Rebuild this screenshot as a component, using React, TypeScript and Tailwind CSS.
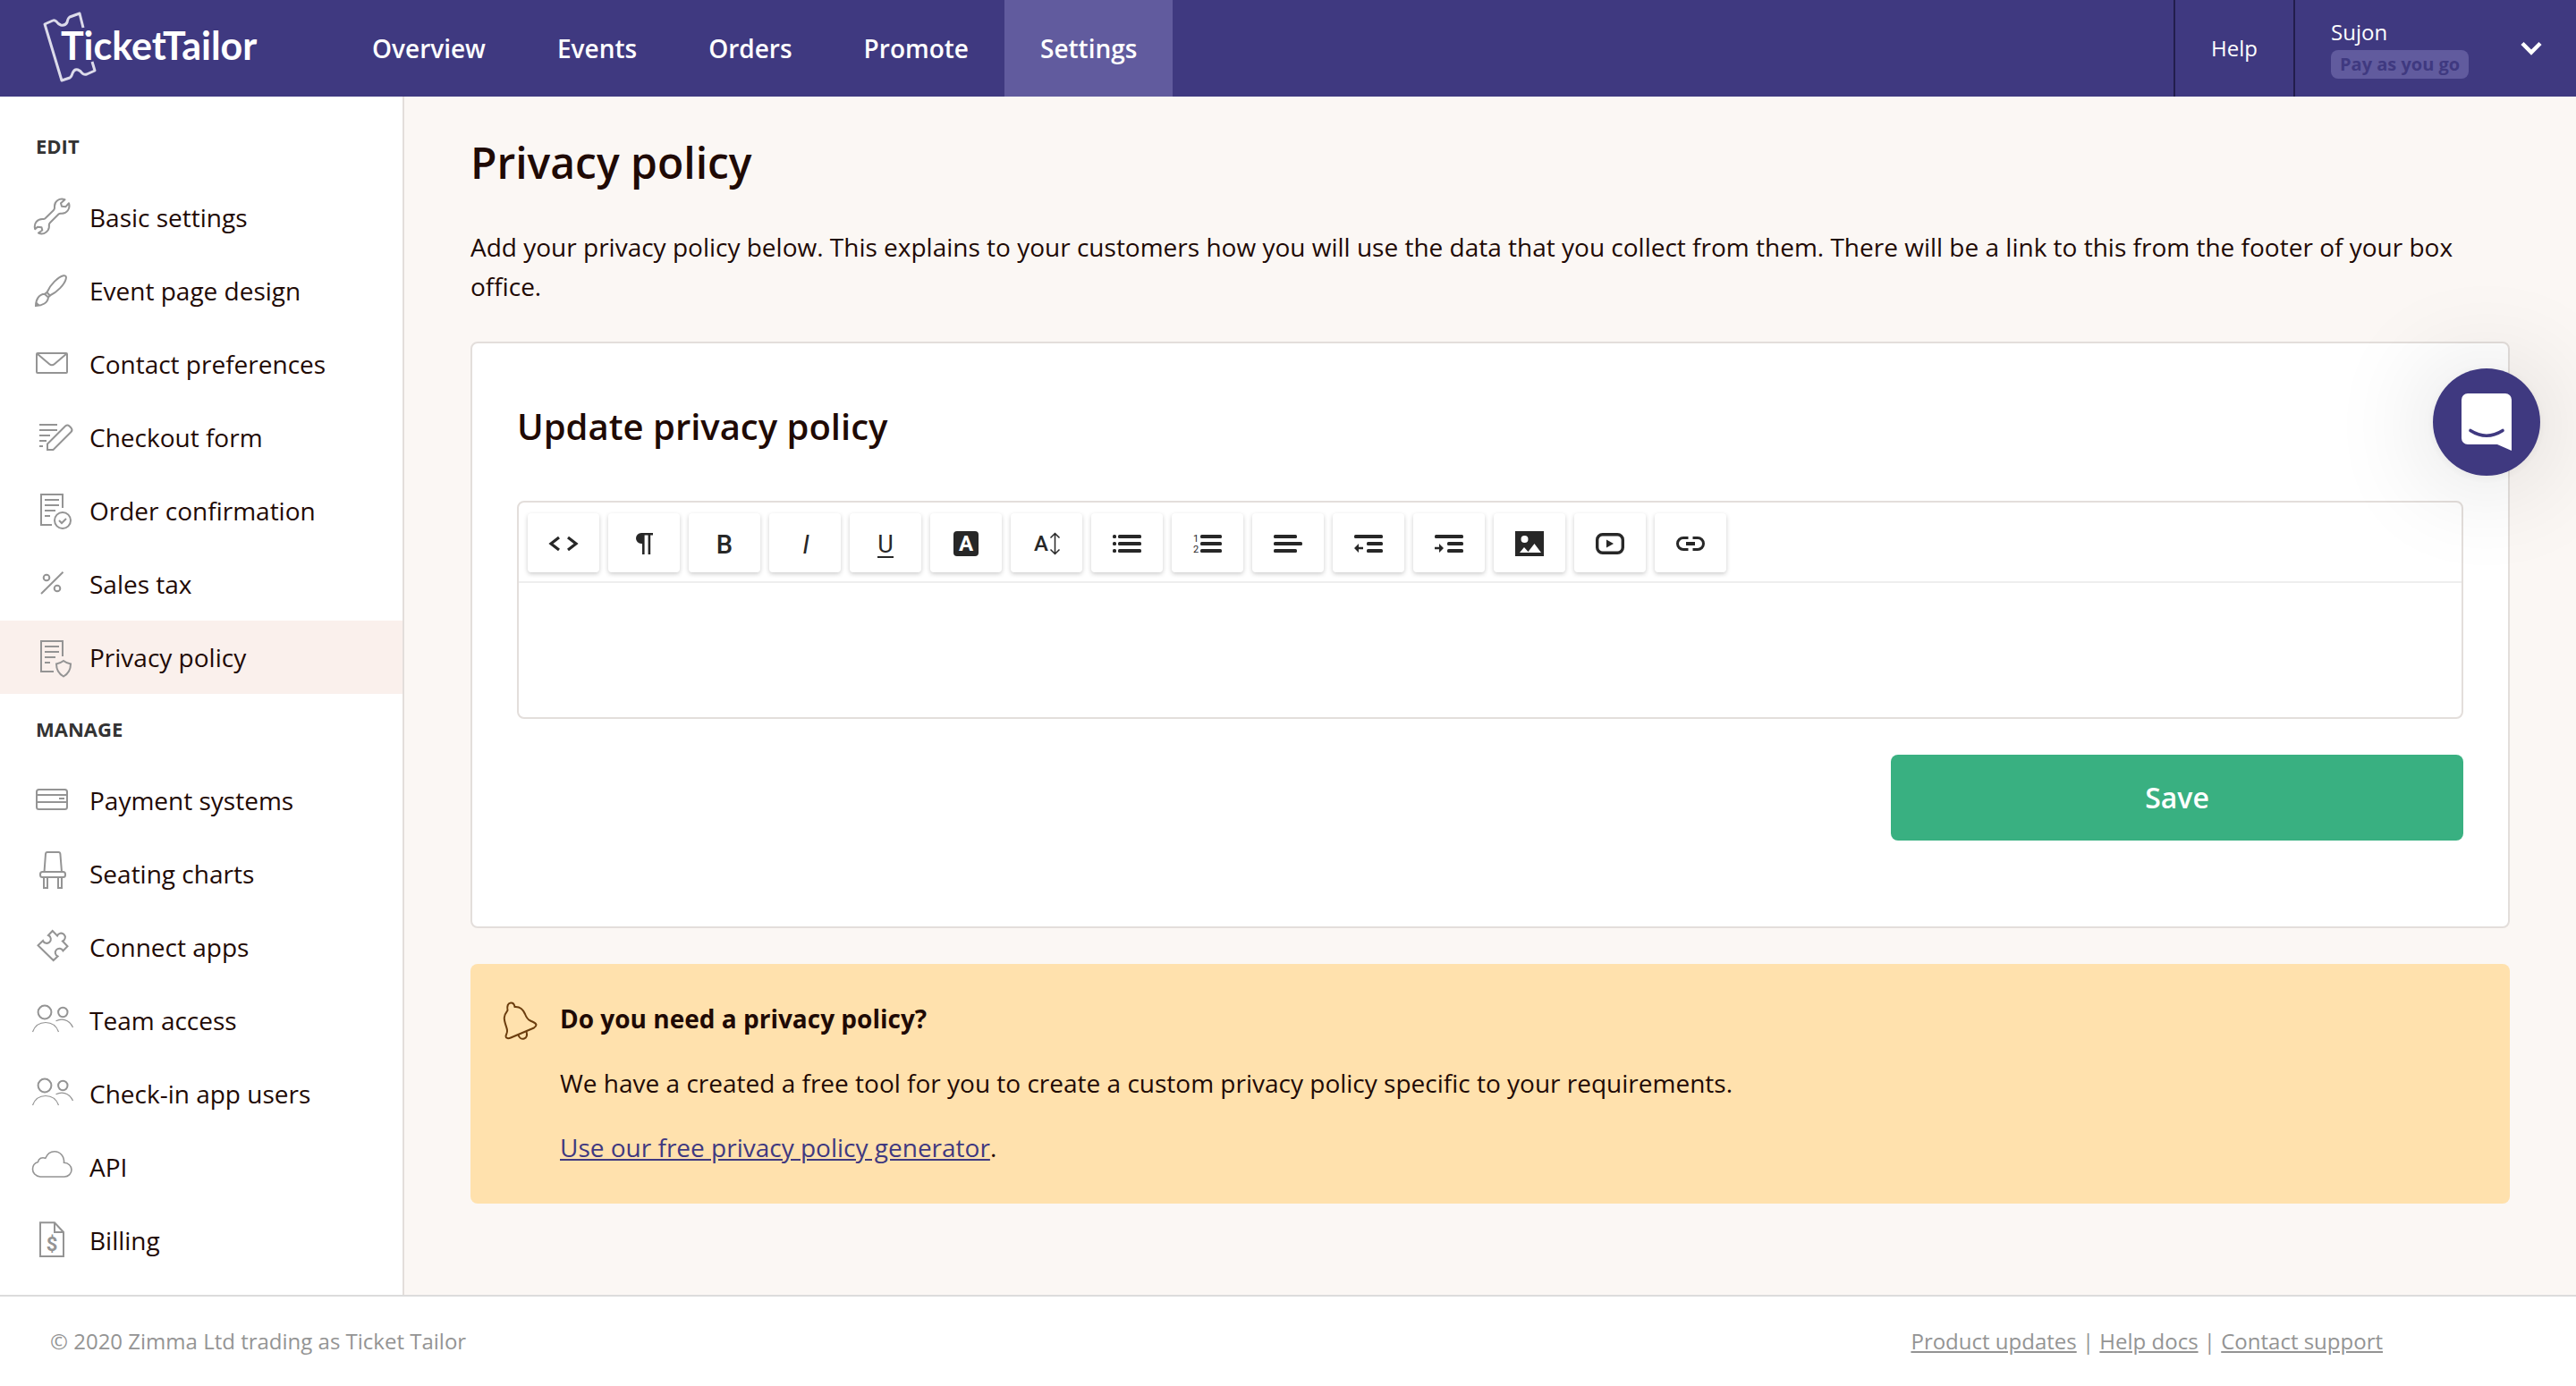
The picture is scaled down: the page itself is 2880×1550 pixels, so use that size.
import React from 'react';

const navItems = ['Overview', 'Events', 'Orders', 'Promote', 'Settings'];

function Logo() {
  return (
    <svg viewBox="0 0 260 84" className="h-[84px] w-[260px]" role="img" aria-label="TicketTailor">
      <path
        d="M45 19L41 3L30 7Q28 8 27 13Q25 17 20 16Q17 15 15 12Q13 10 11 11L2 15L21 78L30 75Q32 74 33 70Q35 65 39 66Q42 67 44 70Q46 72 49 71L58 67L55 57"
        fill="none"
        stroke="#dcdbea"
        strokeWidth="3"
        strokeLinejoin="round"
      />
      <text x="20" y="55" fill="#ffffff" fontFamily="Lato, sans-serif" fontWeight="700" fontSize="43">
        TicketTailor
      </text>
    </svg>
  );
}

function SideIcon({ children }: { children: React.ReactNode }) {
  return (
    <svg
      viewBox="0 0 48 48"
      className="h-12 w-12 shrink-0 overflow-visible text-[#949494]"
      fill="none"
      stroke="currentColor"
      strokeWidth="2"
      aria-hidden="true"
    >
      {children}
    </svg>
  );
}

const people = (
  <>
    <circle cx="14" cy="15" r="7.4" />
    <circle cx="34.3" cy="15" r="5.2" />
    <path strokeWidth="1.2" d="M.5 37C3 30 8.500 26.500 15 26.500S27 30 29.500 37M26.500 24.800C32 22 41 22 45.500 32" />
  </>
);

const docLines = <path d="M14 12H30M14 18H30M14 24H26M14 30H20" />;

const editItems = [
  {
    label: 'Basic settings',
    icon: (
      <path
        strokeLinejoin="round"
        d="M36.500 4.200C30 2 24.500 6.500 25 12.500Q25.200 14.500 24 16L14.500 25.200Q13.500 26.200 12 26C5.500 25.500 1.500 31 3.200 37.300L6 34.700L10.500 35.300L11.300 38.500L7 41.500C13 44.500 19.500 39 18.800 33.500Q18.600 31.500 20 30L29.500 20.500Q30.500 19.500 32.500 19.700C38.500 20.200 43 14.500 41 8.200L37.500 12.200L33 11.800L32 8.200Z"
      />
    ),
  },
  {
    label: 'Event page design',
    icon: (
      <>
        <path d="M16.500 26C20 17.500 29 8.500 35 7.300C38 6.700 38.300 9 37.700 11C36 17.500 27.500 26 19.800 29.500Z" strokeLinejoin="round" />
        <path d="M13.800 27.800C8 28 4 33.500 4 41C11.500 41 17.500 37.500 18 31.500M13.800 27.800L18 31.500M13.800 27.800L16.500 26M18 31.500L19.800 29.500" />
        <path d="M4 36L8.500 40L4 41.200Z" fill="currentColor" stroke="none" />
      </>
    ),
  },
  {
    label: 'Contact preferences',
    icon: (
      <>
        <rect x="5" y="12" width="34" height="22" rx="1" />
        <path d="M5.500 12.500L19 24Q22 26.500 25 24L38.500 12.500" />
      </>
    ),
  },
  {
    label: 'Checkout form',
    icon: (
      <path d="M8 10H28M8 16H28M8 22H20M8 28H16M8 34H12M17 31.500L37 11.500Q39.500 9.500 41.500 11.500L43.500 13.500Q45.500 16 43.500 18L23.500 38H17Z" />
    ),
  },
  {
    label: 'Order confirmation',
    icon: (
      <>
        {docLines}
        <path d="M34 21V6H10V40H22M30 35L33 38L38 33" />
        <circle cx="34" cy="35" r="9" />
      </>
    ),
  },
  {
    label: 'Sales tax',
    icon: (
      <>
        <circle cx="16" cy="17" r="3.3" />
        <circle cx="28" cy="29" r="3.3" />
        <path d="M10 35L34.500 10.800" />
      </>
    ),
  },
  {
    label: 'Privacy policy',
    active: true,
    icon: (
      <>
        {docLines}
        <path d="M34 23V6H10V40H24" />
        <path d="M35 28Q31 31 27 31.500Q27 41 35 45.500Q43 41 43 31.500Q39 31 35 28Z" />
      </>
    ),
  },
];

const manageItems = [
  {
    label: 'Payment systems',
    icon: (
      <>
        <rect x="5" y="12" width="34" height="22" rx="2.500" />
        <path d="M5 18H39M5 26H39M30 22H36" />
      </>
    ),
  },
  {
    label: 'Seating charts',
    icon: (
      <>
        <path d="M13.500 22L15 2Q15.200 0 17 0H29.500Q31.200 0 31.400 2L33 22" />
        <rect x="9" y="22" width="28" height="6" rx="2.500" />
        <path d="M13 28V40H17V28M29 28V40H33V28" />
      </>
    ),
  },
  {
    label: 'Connect apps',
    icon: (
      <path d="M22.700 6L28 11.500A4.600 4.600 0 1 1 34 17.500L39.500 23.300L34.500 28.300A4.600 4.600 0 1 0 28.500 34.500L23.700 39L6.500 22.300L12 17A4.600 4.600 0 1 0 18 11Z" />
    ),
  },
  { label: 'Team access', icon: people },
  { label: 'Check-in app users', icon: people },
  {
    label: 'API',
    icon: (
      <path
        strokeWidth="1.600"
        d="M9 35C3.500 34.500 .5 30.500 .5 26.500C.5 22.500 3 19.500 6.500 18.500C7 14.500 11 12.800 14.800 14.300C17 9 21 6.800 25 6.800C31 6.800 36 12 35.500 19.300C40.500 19.500 44 23 44 27C44 31.500 40.500 35 36 35Z"
      />
    ),
  },
  {
    label: 'Billing',
    icon: (
      <>
        <path d="M25 4.300H9V42H35V15ZM25 4.300V15H35" />
        <text
          x="22"
          y="36"
          textAnchor="middle"
          fill="currentColor"
          stroke="none"
          fontFamily="Roboto, sans-serif"
          fontWeight="700"
          fontSize="22"
        >
          $
        </text>
      </>
    ),
  },
];

function SideGroup({
  title,
  titleClass,
  items,
}: {
  title: string;
  titleClass: string;
  items: { label: string; icon: React.ReactNode; active?: boolean }[];
}) {
  return (
    <section>
      <h2 className={`px-10 text-[22px] leading-[30px] font-bold text-[#333333] ${titleClass}`}>{title}</h2>
      <ul>
        {items.map((item) => (
          <li key={item.label}>
            <a
              href="#"
              aria-current={item.active ? 'page' : undefined}
              className={`flex h-[82px] items-center gap-4 pl-9 ${item.active ? 'bg-[#faf0ec]' : ''}`}
            >
              <SideIcon>{item.icon}</SideIcon>
              {item.label}
            </a>
          </li>
        ))}
      </ul>
    </section>
  );
}

function ToolIcon({ children }: { children: React.ReactNode }) {
  return (
    <svg viewBox="0 0 40 40" className="h-10 w-10" fill="currentColor" aria-hidden="true">
      {children}
    </svg>
  );
}

function Glyph(props: { x: number; y: number; size: number; weight?: number; italic?: boolean; color?: string; children: string }) {
  return (
    <text
      x={props.x}
      y={props.y}
      textAnchor="middle"
      fontFamily="Roboto, sans-serif"
      fontSize={props.size}
      fontWeight={props.weight ?? 400}
      fontStyle={props.italic ? 'italic' : 'normal'}
      fill={props.color ?? 'currentColor'}
    >
      {props.children}
    </text>
  );
}

function Bars({ rows }: { rows: [number, number][] }) {
  return (
    <>
      {rows.map(([from, to], i) => (
        <rect key={i} x={from} y={10 + i * 8} width={to - from} height="4" rx="1.500" />
      ))}
    </>
  );
}

const tools = [
  {
    name: 'HTML',
    icon: <path d="M15 13L6 20L15 27M25 13L34 20L25 27" fill="none" stroke="currentColor" strokeWidth="3.200" />,
  },
  {
    name: 'Formatting',
    icon: <path d="M30 8V10.500H27.200V32H24.600V10.500H20.600V32H18V20H17A6 6 0 0 1 17 8Z" />,
  },
  { name: 'Bold', icon: <Glyph x={20} y={31} size={29} weight={500}>B</Glyph> },
  { name: 'Italic', icon: <Glyph x={21} y={31} size={29} italic>I</Glyph> },
  {
    name: 'Underline',
    icon: (
      <>
        <Glyph x={20} y={30} size={27}>U</Glyph>
        <rect x="11" y="34" width="18" height="2" />
      </>
    ),
  },
  {
    name: 'Text colour',
    icon: (
      <>
        <rect x="6" y="6" width="28" height="28" rx="4" />
        <Glyph x={20} y={28} size={24} weight={700} color="#ffffff">A</Glyph>
      </>
    ),
  },
  {
    name: 'Font size',
    icon: (
      <>
        <Glyph x={14} y={28} size={24} weight={500}>A</Glyph>
        <path d="M29.500 9V31M24.500 13.500L29.500 8.500L34.500 13.500M24.500 26.500L29.500 31.500L34.500 26.500" fill="none" stroke="currentColor" strokeWidth="1.500" />
      </>
    ),
  },
  {
    name: 'Unordered list',
    icon: (
      <>
        <Bars rows={[[4, 8], [4, 8], [4, 8]]} />
        <Bars rows={[[10, 36], [10, 36], [10, 36]]} />
      </>
    ),
  },
  {
    name: 'Ordered list',
    icon: (
      <>
        <Glyph x={7} y={18} size={11}>1</Glyph>
        <Glyph x={7} y={30} size={11}>2</Glyph>
        <Bars rows={[[12, 36], [12, 36], [12, 36]]} />
      </>
    ),
  },
  { name: 'Align left', icon: <Bars rows={[[4, 30], [4, 36], [4, 30]]} /> },
  {
    name: 'Outdent',
    icon: (
      <>
        <Bars rows={[[4, 36], [18, 36], [18, 36]]} />
        <path d="M4 25L9 20V23.700H14V26.300H9V30Z" />
      </>
    ),
  },
  {
    name: 'Indent',
    icon: (
      <>
        <Bars rows={[[4, 36], [18, 36], [18, 36]]} />
        <path d="M14 25L9 20V23.700H4V26.300H9V30Z" />
      </>
    ),
  },
  {
    name: 'Image',
    icon: <path fillRule="evenodd" d="M4 6H36V34H4ZM14.500 11A4 4 0 1 0 14.500 19A4 4 0 1 0 14.500 11ZM9 30H33L25.500 20L18.500 29L14 24Z" />,
  },
  {
    name: 'Video',
    icon: (
      <>
        <rect x="5.700" y="9.700" width="28.600" height="20.600" rx="6" fill="none" stroke="currentColor" strokeWidth="3.400" />
        <path d="M16 15.500L24 20L16 24.500Z" />
      </>
    ),
  },
  {
    name: 'Link',
    icon: (
      <>
        <path d="M17.500 13.500H12A6.500 6.500 0 0 0 12 26.500H17.500M22.500 13.500H28A6.500 6.500 0 0 1 28 26.500H22.500" fill="none" stroke="currentColor" strokeWidth="3" />
        <rect x="15" y="18" width="10" height="4" />
      </>
    ),
  },
];

export default function App() {
  return (
    <div className="flex min-h-screen flex-col bg-[#fbf7f4] font-['Open_Sans',sans-serif] text-[28px] leading-[44px] text-[#1f0a05]">
      <header className="flex h-[108px] bg-[#3f3980] text-white">
        <a href="#" className="flex w-[376px] shrink-0 items-center pl-12">
          <Logo />
        </a>
        <nav aria-label="Main" className="flex flex-1">
          {navItems.map((item) => (
            <a
              key={item}
              href="#"
              aria-current={item === 'Settings' ? 'page' : undefined}
              className={`flex items-center px-10 font-semibold ${item === 'Settings' ? 'bg-[#615b9e]' : ''}`}
            >
              {item}
            </a>
          ))}
        </nav>
        <a href="#" className="flex items-center border-l-2 border-[#221d4c] px-10 text-2xl">
          Help
        </a>
        <button
          type="button"
          className="flex w-[316px] items-center justify-between border-l-2 border-[#221d4c] pr-9 pl-10 text-left text-2xl"
        >
          <span className="flex flex-col items-start gap-1">
            <span className="leading-8">Sujon</span>
            <span className="rounded-lg bg-[#615b9e] px-[10px] text-xl leading-8 font-bold text-[#3f3980]">Pay as you go</span>
          </span>
          <svg viewBox="0 0 28 20" className="h-5 w-7" fill="none" stroke="currentColor" strokeWidth="4.500" aria-hidden="true">
            <path d="M4 4.500L14 14.500L24 4.500" />
          </svg>
        </button>
      </header>

      <div className="flex flex-1">
        <aside className="w-[452px] shrink-0 border-r-2 border-[#e3dedb] bg-white pb-5">
          <SideGroup title="EDIT" titleClass="pt-10 pb-6" items={editItems} />
          <SideGroup title="MANAGE" titleClass="py-6" items={manageItems} />
        </aside>

        <main className="min-w-0 flex-1 px-[74px] pt-[42px]">
          <h1 className="mb-10 text-5xl leading-[64px] font-semibold">Privacy policy</h1>
          <p className="mb-10">
            Add your privacy policy below. This explains to your customers how you will use the data that you collect from
            them. There will be a link to this from the footer of your box office.
          </p>

          <form
            onSubmit={(e) => e.preventDefault()}
            className="rounded-lg border-2 border-[#e3dedb] bg-white px-[50px] pt-16 pb-24"
          >
            <h2 className="mb-[54px] text-[40px] leading-[58px] font-semibold">Update privacy policy</h2>
            <div className="rounded-lg border-2 border-[#e3dedb]">
              <div role="toolbar" aria-label="Formatting" className="flex gap-[10px] border-b-2 border-[#eeeeee] px-[10px] pt-3 pb-[10px]">
                {tools.map((tool) => (
                  <button
                    key={tool.name}
                    type="button"
                    aria-label={tool.name}
                    className="flex h-[66px] w-20 items-center justify-center rounded bg-white pt-0.5 text-[#272727] shadow-[0_2px_5px_rgba(0,0,0,0.2)]"
                  >
                    <ToolIcon>{tool.icon}</ToolIcon>
                  </button>
                ))}
              </div>
              <textarea aria-label="Privacy policy text" className="block h-[150px] w-full resize-none bg-transparent p-5 outline-none" />
            </div>
            <div className="mt-10 flex justify-end">
              <button type="submit" className="h-24 w-[640px] rounded-lg bg-[#39b081] text-[32px] font-semibold text-white">
                Save
              </button>
            </div>
          </form>

          <section className="mt-10 flex gap-5 rounded-lg bg-[#ffe1ad] px-8 pt-[39px] pb-[41px]">
            <svg
              viewBox="0 0 48 48"
              className="h-12 w-12 shrink-0"
              fill="none"
              stroke="#6b3d0e"
              strokeWidth="2"
              strokeLinejoin="round"
              aria-hidden="true"
            >
              <path d="M9.500 13C8.500 8 10 4.800 13 4.500C15.500 4.300 17 6 17.500 9C23 8.500 26.500 11 29 17C30.500 21 31.500 23 35 24.500C38 26 41 26.500 41.500 29C41.500 30.500 40.500 31.500 39 32.500L13 43.500C10.500 44.500 7.500 44.500 7.500 42C7.500 40 9.500 38.500 9 35C8.500 31 5.500 26 5.800 21C6 17 8 15 9.500 13Z" />
              <path d="M21.500 40.500C22.500 43.500 25 45.500 28 44.500C31 43.500 31.500 40 30.500 36.500" />
            </svg>
            <div className="flex flex-col gap-7">
              <p className="font-bold">Do you need a privacy policy?</p>
              <p>We have a created a free tool for you to create a custom privacy policy specific to your requirements.</p>
              <p>
                <a href="#" className="text-[#3f3980] underline">
                  Use our free privacy policy generator
                </a>
                .
              </p>
            </div>
          </section>
        </main>
      </div>

      <footer className="flex justify-between border-t-2 border-[#dcdcdc] bg-white py-[34px] pr-[216px] pl-14 text-2xl leading-8 text-[#949494]">
        <p>© 2020 Zimma Ltd trading as Ticket Tailor</p>
        <p>
          <a href="#" className="underline">Product updates</a>
          {' | '}
          <a href="#" className="underline">Help docs</a>
          {' | '}
          <a href="#" className="underline">Contact support</a>
        </p>
      </footer>

      <button
        type="button"
        aria-label="Open chat"
        className="fixed top-[412px] right-10 flex h-[120px] w-[120px] items-center justify-center rounded-full bg-[#3f3980] shadow-[0_4px_120px_rgba(0,0,0,0.16),0_2px_12px_rgba(0,0,0,0.06)]"
      >
        <svg viewBox="0 0 56 64" className="h-16 w-14" aria-hidden="true">
          <path d="M7 0H49A7 7 0 0 1 56 7V64L40 57H7A7 7 0 0 1 0 50V7A7 7 0 0 1 7 0Z" fill="#ffffff" />
          <path d="M10 41.500Q28 53 46 41.500" fill="none" stroke="#3f3980" strokeWidth="3.600" strokeLinecap="round" />
        </svg>
      </button>
    </div>
  );
}
